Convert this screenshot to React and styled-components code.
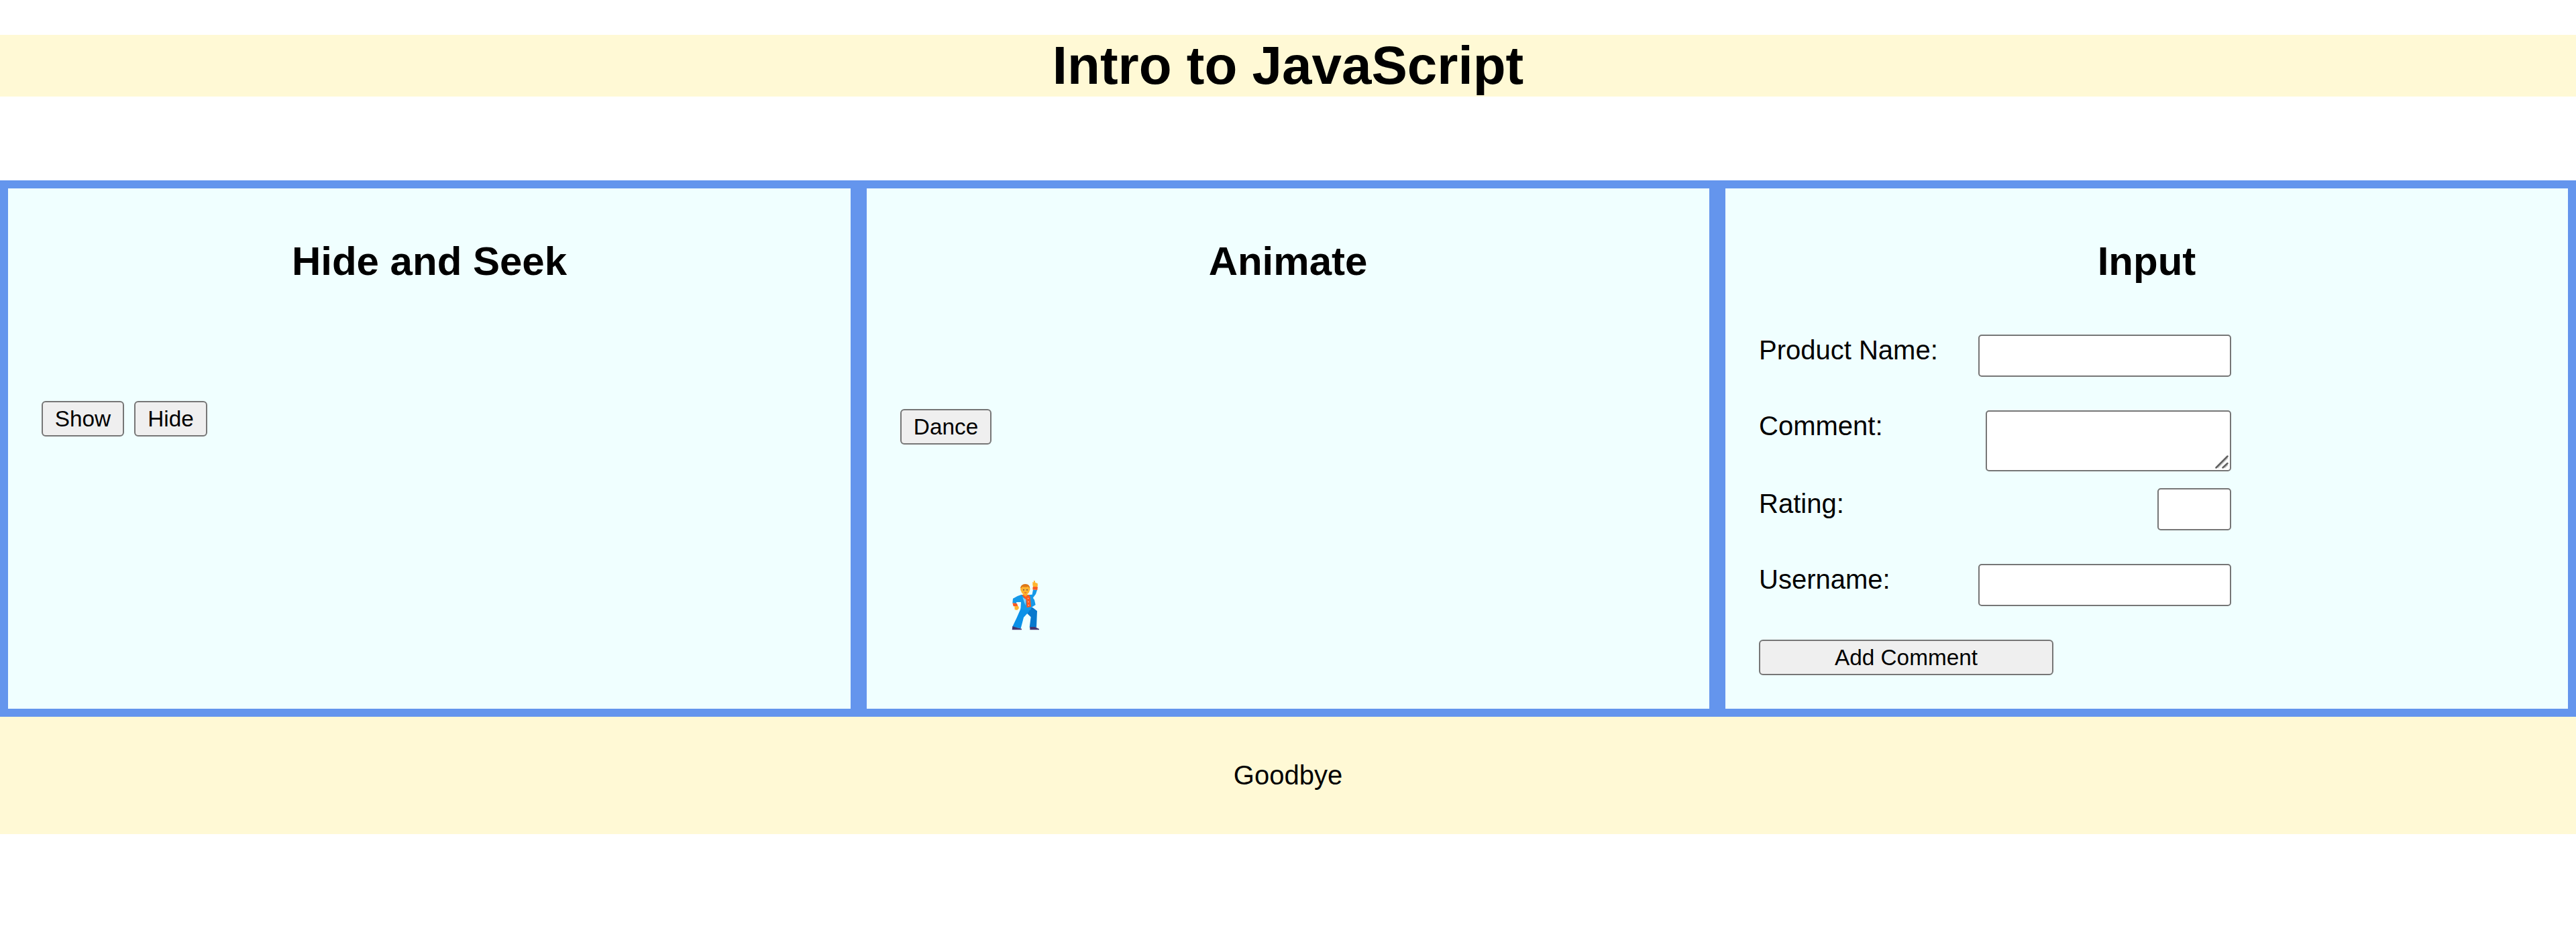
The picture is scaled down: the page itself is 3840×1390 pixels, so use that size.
import React from 'react';
import styled, { createGlobalStyle } from 'styled-components';

const GlobalStyle = createGlobalStyle`
  body {
    margin: 0;
    background: #fff;
    color: #000;
    font-family: Arial, "Liberation Sans", sans-serif;
    font-size: 40px;
    line-height: 46px;
  }
  * { box-sizing: border-box; }
`;

const Page = styled.div`
  display: flex;
  flex-direction: column;
  padding-top: 52px;
`;

const Title = styled.h1`
  margin: 0 0 125px;
  height: 92px;
  background: #fff9d5;
  font-size: 80px;
  line-height: 92px;
  text-align: center;
`;

const Columns = styled.main`
  display: grid;
  grid-template-columns: repeat(3, 1fr);
  height: 800px;
`;

const Card = styled.section`
  display: flex;
  flex-direction: column;
  border: 12px solid #6495ed;
  padding: 74px 50px 50px;
  background: #f0ffff;
`;

const Heading = styled.h2`
  margin: 0;
  height: 69px;
  font-size: 60px;
  line-height: 69px;
  text-align: center;
`;

const Controls = styled.div`
  display: flex;
  gap: 15px;
  margin-top: ${(p) => p.$top}px;
`;

const Button = styled.button`
  width: ${(p) => p.$width}px;
  height: 53px;
  padding: 0;
  border: 2px solid #767676;
  border-radius: 6px;
  background: #efefef;
  color: #000;
  font: 33.333px/38px Arial, "Liberation Sans", sans-serif;
`;

const Dancer = styled.svg`
  display: block;
  width: 100px;
  height: 110px;
  margin: 187px 0 0 138px;
`;

const Form = styled.form`
  display: flex;
  flex-direction: column;
  align-items: flex-start;
  width: 704px;
  margin-top: 75px;
`;

const Row = styled.label`
  display: flex;
  justify-content: space-between;
  align-items: flex-start;
  width: 100%;
  height: ${(p) => p.$height}px;
`;

const Field = styled.input`
  width: ${(p) => p.$width}px;
  height: 63px;
  margin: 0;
  border: 2px solid #767676;
  border-radius: 5px;
  background: #fff;
  font: inherit;
`;

const CommentBox = styled.div`
  display: flex;
  justify-content: flex-end;
  align-items: flex-end;
  width: 366px;
  height: 91px;
  padding: 2px;
  border: 2px solid #767676;
  border-radius: 5px;
  background: #fff;
`;

const Grip = styled.svg`
  display: block;
  width: 20px;
  height: 20px;
`;

const Footer = styled.footer`
  height: 175px;
  padding-top: 64px;
  background: #fff9d5;
  text-align: center;
`;

function DancingMan() {
  return (
    <Dancer viewBox="0 0 300 330" aria-label="Dancing man">
      <path d="M180 88L176 110L160 112L162 122L176 130L192 108L198 90Z" fill="#1499e8" />
      <path d="M178 53L184 56L182 48L188 48L190 57L200 60L201 70L198 77L181 77L178 68Z" fill="#ffb52e" />
      <path d="M179 75L201 76L199 90L178 88Z" fill="#fa5a20" />
      <path d="M150 168L178 168L198 184L195 257L164 257L170 211L148 190Z" fill="#0878cd" />
      <path d="M126 170L172 166L160 188L138 212L125 262L87 256L107 214Z" fill="#0b91e8" />
      <path d="M127 111L170 112L186 134L191 156L174 167L168 180L124 178L126 144L106 144L104 151L88 148L90 128Q108 116 127 111Z" fill="#1499e8" />
      <path d="M129 112L162 112L167 120L171 164L152 169L149 136Z" fill="#fa5a20" />
      <path d="M133 122L148 132L146 160Z" fill="#83d5fb" />
      <path d="M88 148L108 150L112 162L92 163Z" fill="#fa5a20" />
      <path d="M97 162L114 161L117 171L109 180L98 178Z" fill="#ffb52e" />
      <path d="M135 103H154V114L147 120L136 112Z" fill="#ffa321" />
      <path d="M125 78Q125 66 145 66Q164 66 165 82Q169 84 164 94Q162 108 146 111Q128 108 127 95Q121 90 125 82Z" fill="#ffb52e" />
      <path d="M123 83Q124 64 146 63Q165 64 166 83Q160 79 158 74Q144 79 132 75Q130 80 123 83Z" fill="#dd7717" />
      <circle cx="138" cy="89" r="3" fill="#704d58" />
      <circle cx="153" cy="89" r="3" fill="#704d58" />
      <path d="M139 99Q146 103 152 99Q147 109 139 99Z" fill="#c73245" />
      <circle cx="158" cy="127" r="2" fill="#fff" />
      <circle cx="159" cy="143" r="2" fill="#fff" />
      <circle cx="160" cy="158" r="2" fill="#fff" />
      <path d="M88 252L104 257L129 263V268H86ZM166 255L188 255L207 264V268H166Z" fill="#46356d" />
    </Dancer>
  );
}

export default function App() {
  return (
    <>
      <GlobalStyle />
      <Page>
        <Title>Intro to JavaScript</Title>
        <Columns>
          <Card>
            <Heading>Hide and Seek</Heading>
            <Controls $top={174}>
              <Button $width={123}>Show</Button>
              <Button $width={109}>Hide</Button>
            </Controls>
          </Card>
          <Card>
            <Heading>Animate</Heading>
            <Controls $top={186}>
              <Button $width={136}>Dance</Button>
            </Controls>
            <DancingMan />
          </Card>
          <Card>
            <Heading>Input</Heading>
            <Form>
              <Row $height={113}>Product Name:<Field $width={377} /></Row>
              <Row $height={116}>
                Comment:
                <CommentBox>
                  <Grip viewBox="0 0 20 20" fill="none">
                    <path d="M4 19L19 4M14 19L19 14.5" stroke="#c8c8c8" strokeWidth="1.5" />
                    <path d="M1.5 18.5L18.5 1.5M11.5 18.5L18.5 12" stroke="#606060" strokeWidth="2.5" strokeLinecap="round" />
                  </Grip>
                </CommentBox>
              </Row>
              <Row $height={113}>Rating:<Field $width={110} /></Row>
              <Row $height={113}>Username:<Field $width={377} /></Row>
              <Button type="button" $width={439}>Add Comment</Button>
            </Form>
          </Card>
        </Columns>
        <Footer>Goodbye</Footer>
      </Page>
    </>
  );
}
